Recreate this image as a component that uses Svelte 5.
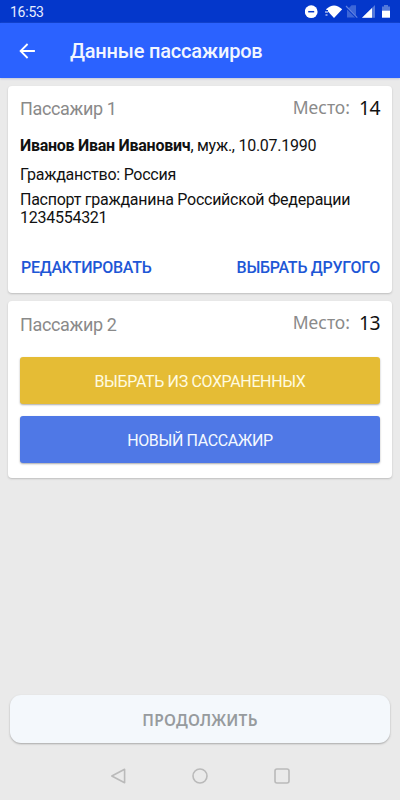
<div class="screen">
    <div class="status">
        <span class="time">16:53</span>
        <svg class="indicators" width="90" height="16" viewBox="0 0 90 16">
            <circle cx="6.2" cy="7.7" r="6.4" fill="#FFF" />
            <path d="M3.2 7.7h6" stroke="#0437CB" stroke-width="1.5" />
            <path d="M21 5.2Q29 -2.4 37.2 5.2L29 14Z" fill="#FFF" />
            <path d="M19.5 7.5h3.5M20 11.2h2.5" stroke="#0437CB" stroke-width="3" />
            <path d="M20 8h3M20.5 11h2" stroke="#FFF" stroke-width="1" />
            <path d="M42 6L46.5 1.2h4.5V13.5h-9Z" fill="#3D67D8" />
            <path d="M40.5 2.5l11.5 11.5" stroke="#0437CB" stroke-width="2" />
            <path d="M41 2l11.3 11.7" stroke="#6384E0" stroke-width="1.1" />
            <path d="M57 13.7L70 1V13.7Z" fill="#5479DB" />
            <path d="M57 13.7L67 4V13.7Z" fill="#FFF" />
            <path d="M77 2.5h2V1h4v1.5h2V7.5h-8Z" fill="#5479DB" />
            <path d="M77 6.7h8V13.7h-8Z" fill="#FFF" />
        </svg>
    </div>

    <header class="toolbar">
        <svg width="16" height="16" viewBox="0 0 16 16">
            <path d="M15.9 8H2M8.6 1L1.6 8L8.6 15" fill="none" stroke="#FFF" stroke-width="1.8" />
        </svg>
        <h1>Данные пассажиров</h1>
    </header>

    <main>
        {#each passengers as { number, seat, person }}
        <section class="card">
            <div class="heading">
                <span class="label">Пассажир {number}</span>
                <span class="seat">Место: <span class="place">{seat}</span></span>
            </div>

            {#if person}
            <div class="details">
                <p class="name"><b>{person.name}</b>, {person.sex}, {person.born}</p>
                <p class="citizen">Гражданство: {person.country}</p>
                <p class="document">{person.document}<br>{person.serial}</p>
            </div>
            <div class="actions">
                <button class="link">РЕДАКТИРОВАТЬ</button>
                <button class="link">ВЫБРАТЬ ДРУГОГО</button>
            </div>
            {:else}
            <div class="choices">
                <button class="choice saved">ВЫБРАТЬ ИЗ СОХРАНЕННЫХ</button>
                <button class="choice fresh">НОВЫЙ ПАССАЖИР</button>
            </div>
            {/if}
        </section>
        {/each}
    </main>

    <button class="continue">ПРОДОЛЖИТЬ</button>

    <nav class="navigation">
        <svg width="16" height="16" viewBox="0 0 16 16">
            <path d="M14.6 1.3V14.7L1.8 8Z" />
        </svg>
        <svg width="16" height="16" viewBox="0 0 16 16">
            <circle cx="8" cy="8" r="7" />
        </svg>
        <svg width="16" height="16" viewBox="0 0 16 16">
            <rect x="1" y="1" width="14" height="14" rx="2" />
        </svg>
    </nav>
</div>

<script>
const passengers = [
    {
        number : 1,
        seat   : 14,
        person : {
            name     : "Иванов Иван Иванович",
            sex      : "муж.",
            born     : "10.07.1990",
            country  : "Россия",
            document : "Паспорт гражданина Российской Федерации",
            serial   : "1234554321",
        },
    },
    { number : 2, seat : 13 },
];
</script>

<style>
    :global(body) {
        margin: 0;
    }

    .screen {
        display: flex;
        flex-flow: column nowrap;
        box-sizing: border-box;
        width: 400px;
        height: 800px;

        font-family: Roboto, sans-serif;
        white-space: nowrap;
        color: #111;
        background: #EAEAEA;
    }

    button {
        padding: 0;
        border: 0;
        font-family: inherit;
        white-space: nowrap;
    }

    .status {
        display: flex;
        justify-content: space-between;
        box-sizing: border-box;
        height: 23px;
        padding: 4px 5px 0 10px;

        color: #E6EDFF;
        background: #0437CB;
    }

    .time {
        font-size: 14px;
        line-height: 17px;
        letter-spacing: -0.25px;
    }

    .toolbar {
        display: flex;
        align-items: center;
        gap: 35px;
        box-sizing: border-box;
        height: 55px;
        padding: 0 0 0 19px;

        color: #F2F6FF;
        background: #2B62FF;
        box-shadow: 0 1px 2px #C3C8D8;
    }

    h1 {
        margin: 0;
        font-size: 20px;
        font-weight: 500;
        line-height: 24px;
        letter-spacing: -0.2px;
    }

    main {
        display: flex;
        flex-flow: column nowrap;
        gap: 8px;
        padding: 8px 8px 0;
    }

    .card {
        box-sizing: border-box;
        height: 207px;
        padding: 0 12px;

        border-radius: 4px;
        background: #FFF;
        box-shadow: 0 1px 2px #BDBDBD;
    }

    .card:last-child {
        height: 177px;
    }

    .heading {
        display: flex;
        justify-content: space-between;
        height: 44px;

        color: #8A8A8A;
    }

    .label {
        font-size: 18px;
        line-height: 46px;
        letter-spacing: -0.35px;
    }

    .card:last-child .label {
        line-height: 48px;
    }

    .seat {
        display: flex;
        gap: 9px;
        font-family: "Noto Sans", sans-serif;
        font-size: 17.5px;
        line-height: 43px;
    }

    .place {
        font-size: 19.3px;
        letter-spacing: -0.5px;
        color: #111;
    }

    p {
        margin: 0;
        font-size: 16px;
        line-height: 18px;
        letter-spacing: -0.26px;
    }

    .name {
        padding-top: 7px;
    }

    .citizen {
        padding-top: 11px;
    }

    .document {
        padding-top: 7px;
    }

    .actions {
        display: flex;
        justify-content: space-between;
        padding: 31px 0 0 1px;
    }

    .link {
        font-size: 16px;
        font-weight: 500;
        line-height: 20px;
        letter-spacing: -0.28px;
        color: #1E57D6;
        background: none;
    }

    .choices {
        display: flex;
        flex-flow: column nowrap;
        gap: 12px;
        padding-top: 12px;
    }

    .choice {
        height: 47px;
        padding-top: 1px;

        font-size: 16px;
        letter-spacing: -0.36px;
        border-radius: 3px;
        box-shadow: 0 1px 2px #AAA;
    }

    .saved {
        color: #FFFBE0;
        background: #E5BC35;
    }

    .fresh {
        color: #F4F8FF;
        background: #4F78E6;
    }

    .continue {
        height: 48px;
        margin: auto 10px 8px;
        padding-top: 2px;

        font-family: "Noto Sans", sans-serif;
        font-size: 15.5px;
        font-weight: 600;
        letter-spacing: 0.2px;
        color: #979B9E;
        border-radius: 11px;
        background: #F4F8FC;
        box-shadow: 0 1px 2px #A8A8A8;
    }

    .navigation {
        display: flex;
        justify-content: center;
        align-items: center;
        gap: 66px;
        height: 49px;
    }

    .navigation svg {
        fill: none;
        stroke: #BABABA;
        stroke-width: 1.6;
        stroke-linejoin: round;
    }
</style>
